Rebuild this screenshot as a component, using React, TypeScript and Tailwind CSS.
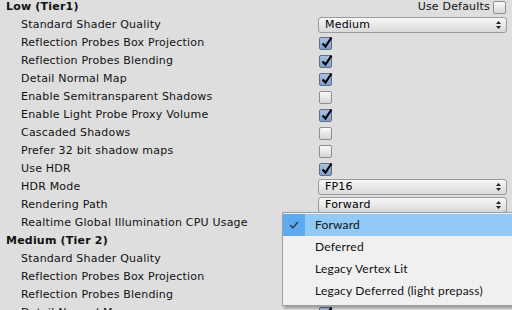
import React from "react";

type Row =
  | { kind: "header"; label: string; right?: boolean }
  | { kind: "check"; label: string; checked: boolean }
  | { kind: "select"; label: string; value: string }
  | { kind: "plain"; label: string };

const rows: Row[] = [
  { kind: "header", label: "Low (Tier1)", right: true },
  { kind: "select", label: "Standard Shader Quality", value: "Medium" },
  { kind: "check", label: "Reflection Probes Box Projection", checked: true },
  { kind: "check", label: "Reflection Probes Blending", checked: true },
  { kind: "check", label: "Detail Normal Map", checked: true },
  { kind: "check", label: "Enable Semitransparent Shadows", checked: false },
  { kind: "check", label: "Enable Light Probe Proxy Volume", checked: true },
  { kind: "check", label: "Cascaded Shadows", checked: false },
  { kind: "check", label: "Prefer 32 bit shadow maps", checked: false },
  { kind: "check", label: "Use HDR", checked: true },
  { kind: "select", label: "HDR Mode", value: "FP16" },
  { kind: "select", label: "Rendering Path", value: "Forward" },
  { kind: "plain", label: "Realtime Global Illumination CPU Usage" },
  { kind: "header", label: "Medium (Tier 2)" },
  { kind: "select", label: "Standard Shader Quality", value: "Medium" },
  { kind: "check", label: "Reflection Probes Box Projection", checked: true },
  { kind: "check", label: "Reflection Probes Blending", checked: true },
  { kind: "check", label: "Detail Normal Map", checked: true },
];

function Checkbox({ checked }: { checked: boolean }) {
  return (
    <div
      className={
        checked
          ? "relative w-[13px] h-[13px] rounded-[2px] border border-[#5f6f87] bg-gradient-to-b from-[#a9c1e3] to-[#7f9fcc]"
          : "relative w-[13px] h-[13px] rounded-[2px] border border-[#8e8e8e] bg-gradient-to-b from-[#fafafa] to-[#d6d6d6]"
      }
    >
      {checked && (
        <svg className="absolute left-[1px] top-[-2px]" width="12" height="13" viewBox="0 0 12 13">
          <path d="M1.5 7.5 L4.5 10.5 L10.5 1.5" fill="none" stroke="#000" strokeWidth="2.2" />
        </svg>
      )}
    </div>
  );
}

function Select({ value }: { value: string }) {
  return (
    <div className="flex items-center justify-between w-[189px] h-[16px] rounded-[3px] border border-[#9a9a9a] bg-gradient-to-b from-[#f7f7f7] to-[#d9d9d9] pl-[6px] pr-[5px] text-[11px] text-black">
      <span>{value}</span>
      <svg width="5" height="8" viewBox="0 0 5 8">
        <path d="M0 3 L2.5 0 L5 3 Z M0 5 L2.5 8 L5 5 Z" fill="#222" />
      </svg>
    </div>
  );
}

function Menu() {
  const items = ["Forward", "Deferred", "Legacy Vertex Lit", "Legacy Deferred (light prepass)"];
  return (
    <div className="absolute left-[282px] top-[212px] w-[240px] h-[94px] border border-[#a0a0a0] bg-[#f0f0f0] shadow-[2px_2px_3px_rgba(0,0,0,0.35)] pt-[1px]">
      {items.map((it, i) => (
        <div
          key={it}
          className={
            i === 0
              ? "flex items-center h-[22px] bg-[#91c9f7]"
              : "flex items-center h-[22px]"
          }
        >
          <div className={i === 0 ? "w-[22px] h-full flex items-center justify-center bg-[#5ea9ef]" : "w-[22px] h-full"}>
            {i === 0 && (
              <svg width="10" height="8" viewBox="0 0 10 8">
                <path d="M1 4 L3.8 6.8 L9 1" fill="none" stroke="#2b3a4a" strokeWidth="1.4" />
              </svg>
            )}
          </div>
          <span
            className="pl-[10px] text-[12px] text-[#111]"
            style={{ fontFamily: 'Lato, "Noto Sans", sans-serif' }}
          >
            {it}
          </span>
        </div>
      ))}
    </div>
  );
}

export default function App() {
  return (
    <div
      className="relative w-[512px] h-[310px] overflow-hidden bg-[#dedede] text-[#111] tracking-[0.2px]"
      style={{ fontFamily: '"DejaVu Sans", Verdana, sans-serif' }}
    >
      <div className="flex flex-col mt-[-2px]">
        {rows.map((r, i) => (
          <div key={i} className="flex items-center h-[18px]">
            {r.kind === "header" ? (
              <>
                <span className="pl-[6px] text-[11px] font-bold flex-1">{r.label}</span>
                {r.right && (
                  <div className="flex items-center gap-[3px] pr-[6px] pt-[1px] text-[11px]">
                    <span>Use Defaults</span>
                    <Checkbox checked={false} />
                  </div>
                )}
              </>
            ) : (
              <>
                <span className="pl-[21px] w-[318px] shrink-0 text-[11px] whitespace-nowrap">{r.label}</span>
                {r.kind === "check" && (
                  <div className="pl-[1px]">
                    <Checkbox checked={r.checked} />
                  </div>
                )}
                {r.kind === "select" && <Select value={r.value} />}
              </>
            )}
          </div>
        ))}
      </div>
      <Menu />
    </div>
  );
}
